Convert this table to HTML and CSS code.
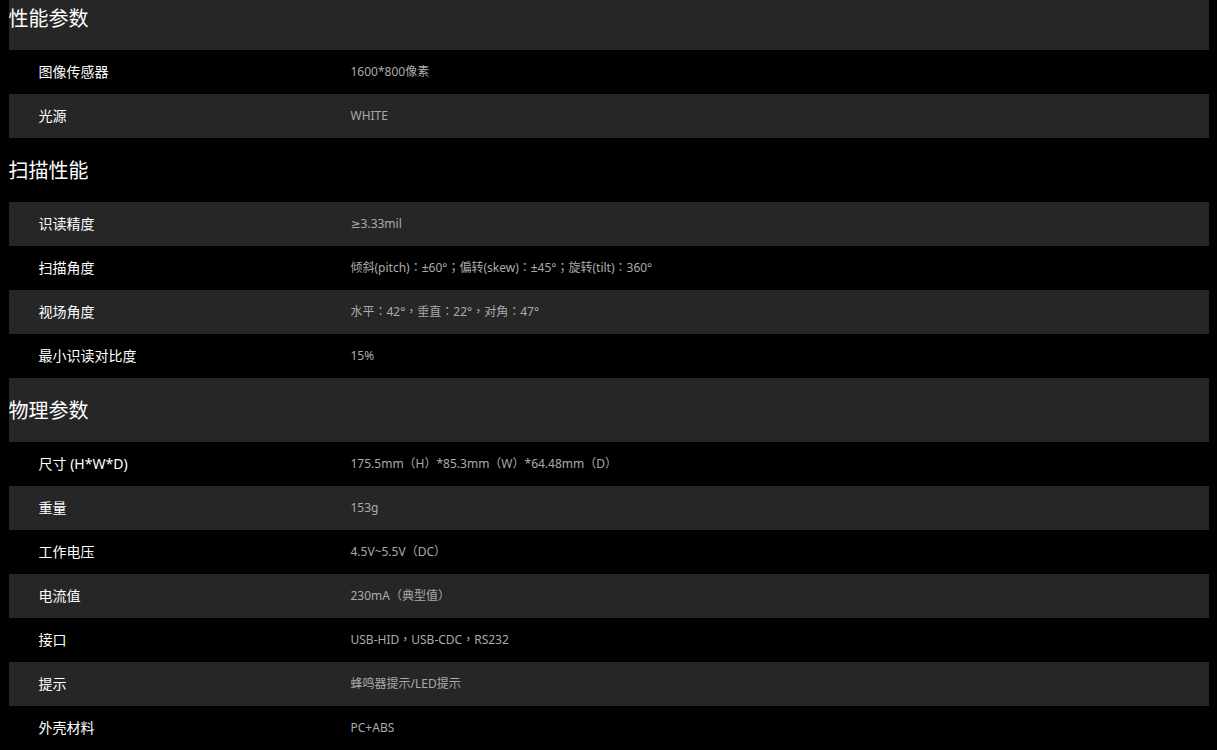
FILE: index.html
```html
<!DOCTYPE html>
<html lang="zh-CN">
<head>
<meta charset="utf-8">
<title>参数</title>
<link rel="stylesheet" href="styles.css">
</head>
<body>
<table class="spec">
  <tbody>
    <tr class="head"><th colspan="2">性能参数</th></tr>
    <tr><td class="k">图像传感器</td><td class="v" lang="zh-TW">1600*800像素</td></tr>
    <tr><td class="k">光源</td><td class="v" lang="zh-TW">WHITE</td></tr>
    <tr class="head"><th colspan="2">扫描性能</th></tr>
    <tr><td class="k">识读精度</td><td class="v" lang="zh-TW"><span class="sym">≥</span>3.33mil</td></tr>
    <tr><td class="k">扫描角度</td><td class="v" lang="zh-TW">倾斜(pitch)：±60°；偏转(skew)：±45°；旋转(tilt)：360°</td></tr>
    <tr><td class="k">视场角度</td><td class="v" lang="zh-TW">水平：42°，垂直：22°，对角：47°</td></tr>
    <tr><td class="k">最小识读对比度</td><td class="v" lang="zh-TW">15%</td></tr>
    <tr class="head"><th colspan="2">物理参数</th></tr>
    <tr><td class="k">尺寸 (H*W*D)</td><td class="v" lang="zh-TW">175.5mm（H）*85.3mm（W）*64.48mm（D）</td></tr>
    <tr><td class="k">重量</td><td class="v" lang="zh-TW">153g</td></tr>
    <tr><td class="k">工作电压</td><td class="v" lang="zh-TW">4.5V~5.5V（DC）</td></tr>
    <tr><td class="k">电流值</td><td class="v" lang="zh-TW">230mA（典型值）</td></tr>
    <tr><td class="k">接口</td><td class="v" lang="zh-TW">USB-HID，USB-CDC，RS232</td></tr>
    <tr><td class="k">提示</td><td class="v" lang="zh-TW">蜂鸣器提示/LED提示</td></tr>
    <tr><td class="k">外壳材料</td><td class="v" lang="zh-TW">PC+ABS</td></tr>
  </tbody>
</table>
</body>
</html>
```
FILE: styles.css
```css
html, body {
  margin: 0;
  padding: 0;
  background: #000;
}
body {
  font-family: "Noto Sans", "Noto Sans CJK SC", sans-serif;
  overflow: hidden;
}
.spec {
  width: 1200px;
  margin: -14px auto 0;
  border-collapse: collapse;
  border-spacing: 0;
}
.spec tr:nth-child(odd) {
  background: #262626;
}
.spec th {
  height: 62px;
  padding: 0 0 2px;
  text-align: left;
  font-weight: normal;
  font-size: 20px;
  color: #fff;
  vertical-align: middle;
}
.spec td {
  height: 42px;
  padding: 0 0 2px;
  vertical-align: middle;
}
.spec .k {
  width: 312px;
  padding-left: 30px;
  font-size: 14px;
  color: #fff;
  font-weight: 400;
}
.spec .v {
  font-family: "Noto Sans", "Noto Sans CJK TC", sans-serif;
  font-size: 12px;
  color: #aaa;
}
.sym {
  font-family: "DejaVu Sans", sans-serif;
}
```
